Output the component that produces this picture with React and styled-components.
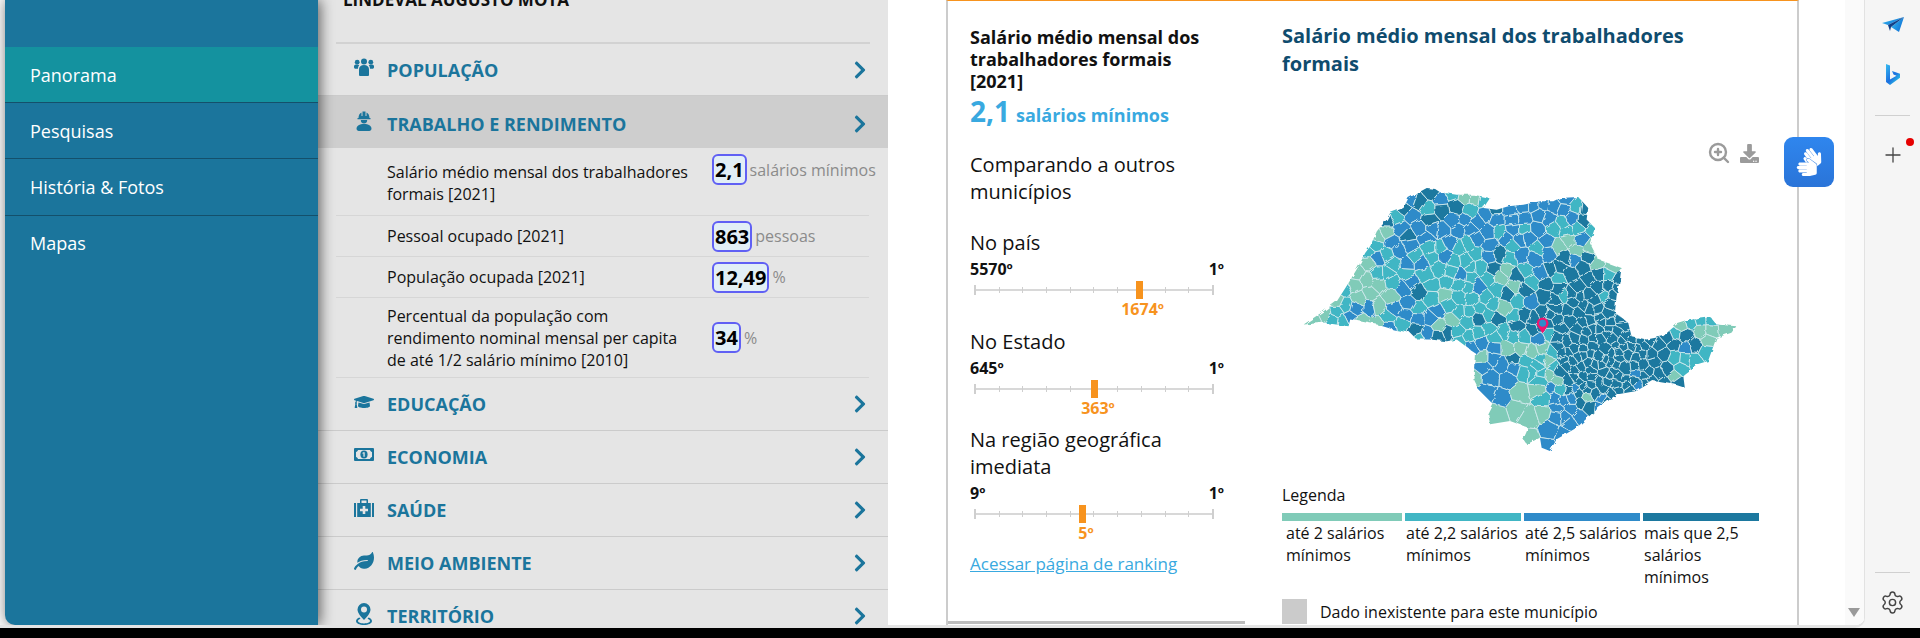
import { useMemo } from 'react';
import styled, { createGlobalStyle } from 'styled-components';
import { FaChevronRight, FaDownload, FaGraduationCap, FaLeaf, FaSignLanguage } from 'react-icons/fa';
import { Plus, Settings, ZoomIn } from 'lucide-react';

const GlobalStyle = createGlobalStyle`
  html, body {
    margin: 0;
    height: 100%;
    overflow: hidden;
    background: #000;
    font-family: "Open Sans", "Liberation Sans", sans-serif;
  }
`;

const OUTLINE = [[100,615],[160,575],[200,545],[235,490],[265,440],[285,400],[300,380],[320,335],[350,300],[360,280],[400,265],[415,235],[470,205],[495,208],[510,218],[560,225],[610,225],[660,235],[640,265],[680,270],[715,260],[760,255],[810,245],[850,245],[870,235],[925,232],[955,265],[950,300],[975,325],[960,370],[985,420],[1055,445],[1050,480],[1040,530],[1035,580],[1075,610],[1085,650],[1130,660],[1180,650],[1220,615],[1285,595],[1320,590],[1340,615],[1400,620],[1385,640],[1340,655],[1315,725],[1280,735],[1240,765],[1245,805],[1215,795],[1150,785],[1100,815],[1040,825],[980,870],[920,925],[860,960],[840,995],[815,985],[810,955],[770,975],[760,960],[775,925],[720,905],[660,915],[655,885],[670,855],[625,810],[610,780],[615,700],[600,690],[560,660],[530,665],[480,660],[440,660],[420,640],[370,630],[320,615],[240,600],[235,620],[160,610]];

const LEGEND_COLORS = ['#80cbb8', '#41b6c4', '#2f8bc9', '#1c789f'];

const ANCHORS = [
  [[760,830,1.4,100],[300,520,1.2,90],[700,480,1.2,50],[680,900,1.2,60],[1050,460,.8,40],[940,390,.9,30],[1350,640,1.5,50],[1060,650,.8,30]],
  [[830,870,1.6,40],[800,760,1.3,40],[1280,680,1.4,70],[560,450,.9,80],[200,590,1.6,40],[700,430,1,150],[350,450,.8,80],[620,600,1,60]],
  [[500,350,1.3,120],[780,300,1.5,90],[900,910,2.4,60],[700,740,1.2,50],[680,790,1.6,45],[1000,440,1,40],[270,560,1.2,30],[830,970,2,30],[450,570,1.2,50]],
  [[1000,700,2.1,110],[900,520,1.2,90],[1200,650,1.2,60],[700,580,1,60],[500,540,1,50],[450,230,1,60],[620,240,.9,40],[330,360,1,40]],
];

function makeRandom(seed) {
  let a = seed;
  return () => {
    a = (a + 0x6d2b79f5) | 0;
    let t = Math.imul(a ^ (a >>> 15), 1 | a);
    t = (t + Math.imul(t ^ (t >>> 7), 61 | t)) ^ t;
    return ((t ^ (t >>> 14)) >>> 0) / 4294967296;
  };
}

function isInside(x, y) {
  let inside = false;
  for (let i = 0, j = OUTLINE.length - 1; i < OUTLINE.length; j = i++) {
    const [xi, yi] = OUTLINE[i];
    const [xj, yj] = OUTLINE[j];
    if (yi > y !== yj > y && x < ((xj - xi) * (y - yi)) / (yj - yi) + xi) inside = !inside;
  }
  return inside;
}

function spacing(x, y) {
  const metro = Math.hypot(x - 1010, y - 720);
  if (metro < 130) return 17;
  if (metro < 230) return 22;
  if (y > 760) return 40;
  return 27;
}

function clipCell(poly, a, b) {
  const mx = (a[0] + b[0]) / 2;
  const my = (a[1] + b[1]) / 2;
  const nx = b[0] - a[0];
  const ny = b[1] - a[1];
  const out = [];
  for (let i = 0; i < poly.length; i++) {
    const p = poly[i];
    const q = poly[(i + 1) % poly.length];
    const dp = (p[0] - mx) * nx + (p[1] - my) * ny;
    const dq = (q[0] - mx) * nx + (q[1] - my) * ny;
    if (dp <= 0) out.push(p);
    if (dp < 0 !== dq < 0) {
      const t = dp / (dp - dq);
      out.push([p[0] + (q[0] - p[0]) * t, p[1] + (q[1] - p[1]) * t]);
    }
  }
  return out;
}

function buildCells() {
  const random = makeRandom(1674);
  const seeds = [];
  for (let i = 0; i < 9000; i++) {
    const x = 90 + random() * 1320;
    const y = 195 + random() * 810;
    if (!isInside(x, y)) continue;
    const gap = spacing(x, y);
    if (seeds.every((s) => Math.hypot(s[0] - x, s[1] - y) > gap)) seeds.push([x, y]);
  }
  return seeds.map((seed) => {
    let poly = [[seed[0] - 120, seed[1] - 120], [seed[0] + 120, seed[1] - 120], [seed[0] + 120, seed[1] + 120], [seed[0] - 120, seed[1] + 120]];
    seeds
      .filter((s) => s !== seed && Math.hypot(s[0] - seed[0], s[1] - seed[1]) < 240)
      .forEach((s) => { poly = clipCell(poly, seed, s); });
    const scores = ANCHORS.map((list) =>
      list.reduce((sum, [ax, ay, w, r]) => sum + w * Math.exp(-((seed[0] - ax) ** 2 + (seed[1] - ay) ** 2) / (2 * r * r)), random() * 1.7)
    );
    return {
      points: poly.map((p) => p.map((n) => n.toFixed(1)).join(',')).join(' '),
      color: LEGEND_COLORS[scores.indexOf(Math.max(...scores))],
    };
  });
}

const Frame = styled.div`
  display: flex;
  width: 1920px;
  height: 628px;
  background: #f5f5f5;
  overflow: hidden;
`;

const Viewport = styled.div`
  display: flex;
  width: 1865px;
  height: 628px;
  background: #f8f8f8;
  border-bottom-right-radius: 10px;
  border-right: 1px solid #e2e2e2;
  border-bottom: 3px solid #e4e4e4;
  box-sizing: border-box;
  overflow: hidden;
`;

const Sidebar = styled.nav`
  width: 313px;
  margin-left: 5px;
  flex-shrink: 0;
  padding-top: 47px;
  box-sizing: border-box;
  background: #1b759c;
  border-bottom-left-radius: 10px;
  box-shadow: 2px 0 14px rgba(0, 0, 0, 0.6);
  position: relative;
  z-index: 2;
`;

const NavItem = styled.a`
  display: flex;
  align-items: center;
  height: ${(p) => p.$height}px;
  padding-left: 25px;
  box-sizing: border-box;
  color: #fff;
  font-size: 18px;
  background: ${(p) => (p.$active ? '#14929f' : 'transparent')};
  border-bottom: ${(p) => (p.$last ? 'none' : '1px solid #14506b')};
`;

const Panel = styled.section`
  width: 570px;
  flex-shrink: 0;
  background: #e5e5e5;
  overflow: hidden;
`;

const Person = styled.h2`
  margin: -12px 18px 0;
  height: 56px;
  padding-left: 7px;
  box-sizing: border-box;
  border-bottom: 2px solid #d2d2d2;
  font-size: 17px;
  line-height: 24px;
  font-weight: 700;
  color: #111;
`;

const TopicRow = styled.div`
  display: flex;
  align-items: center;
  height: ${(p) => p.$height || 53}px;
  flex-shrink: 0;
  padding: ${(p) => (p.$open ? '3px' : '0')} 18px 0 36px;
  box-sizing: border-box;
  background: ${(p) => (p.$open ? '#cecece' : 'transparent')};
  border-bottom: ${(p) => (p.$open ? 'none' : '1px solid #cbcbcb')};
  color: #1b759c;
`;

const TopicIcon = styled.span`
  display: flex;
  justify-content: center;
  width: 20px;
  margin: -5px 13px 0 0;
  font-size: 20px;
`;

const TopicName = styled.span`
  flex: 1;
  font-size: 18px;
  font-weight: 700;
`;

const Stat = styled.div`
  display: grid;
  grid-template-columns: 325px 1fr;
  align-items: ${(p) => (p.$top ? 'start' : 'center')};
  height: ${(p) => p.$height}px;
  margin: 0 19px 0 18px;
  padding: ${(p) => (p.$top ? '6px' : '0')} 0 0 51px;
  box-sizing: border-box;
  border-bottom: 1px solid #d6d6d6;
`;

const StatLabel = styled.div`
  width: ${(p) => p.$width || 310}px;
  margin-top: ${(p) => (p.$top ? '7px' : '0')};
  font-size: 16px;
  line-height: 22px;
  color: #111;
`;

const StatValue = styled.div`
  display: flex;
  align-items: center;
  white-space: nowrap;
`;

const ValueBox = styled.b`
  height: 31px;
  padding: 0 1px;
  box-sizing: border-box;
  border: 2px solid #6060f4;
  border-radius: 6px;
  background: #e2eff6;
  font-size: 20px;
  line-height: 27px;
  color: #000;
`;

const Unit = styled.span`
  margin-left: 3px;
  font-size: 16px;
  color: #8b8b8b;
`;

const Page = styled.main`
  flex: 1;
  position: relative;
  background: #fff;
  padding-left: 58px;
  min-width: 0;
`;

const Card = styled.article`
  display: flex;
  width: 853px;
  height: 625px;
  box-sizing: border-box;
  border-top: 1px solid #f7931e;
  border-left: 2px solid #cccccc;
  border-right: 2px solid #cccccc;
`;

const Summary = styled.div`
  width: 297px;
  height: 623px;
  flex-shrink: 0;
  padding: 25px 0 0 22px;
  box-sizing: border-box;
  border-bottom: 3px solid #bdbdbd;
`;

const SummaryTitle = styled.h3`
  margin: 0;
  width: 250px;
  font-size: 18px;
  line-height: 22px;
  font-weight: 700;
  color: #111;
`;

const SummaryValue = styled.div`
  display: flex;
  align-items: baseline;
  height: 38px;
  line-height: 38px;
  font-size: 18px;
  font-weight: 700;
  color: #39a9e0;

  b {
    margin-right: 6px;
    font-size: 28px;
    font-weight: 700;
  }
`;

const CompareTitle = styled.div`
  margin: 21px 0 24px;
  font-size: 20px;
  line-height: 27px;
  color: #111;
`;

const RankBlock = styled.div`
  width: 254px;
  height: ${(p) => p.$height}px;
`;

const RankName = styled.div`
  width: 230px;
  font-size: 20px;
  line-height: 27px;
  color: #111;
`;

const RankEnds = styled.div`
  display: flex;
  justify-content: space-between;
  margin-top: 1px;
  font-size: 16px;
  line-height: 24px;
  font-weight: 700;
  color: #111;
`;

const Track = styled.div`
  position: relative;
  display: flex;
  justify-content: space-between;
  align-items: center;
  width: 240px;
  height: 10px;
  margin: 4px 0 0 4px;

  &::before {
    content: '';
    position: absolute;
    left: 0;
    right: 0;
    top: 4px;
    height: 2px;
    background: #d8d8d8;
  }
`;

const Tick = styled.i`
  width: ${(p) => (p.$end ? 2 : 1)}px;
  height: ${(p) => (p.$end ? 10 : 6)}px;
  background: #cfcfcf;
  position: relative;
`;

const Marker = styled.div`
  position: absolute;
  left: ${(p) => p.$at}%;
  top: -4px;
  width: 7px;
  height: 18px;
  margin-left: -3.5px;
  background: #f7931e;
`;

const MarkerLabel = styled.div`
  position: absolute;
  left: ${(p) => p.$at}%;
  top: 13px;
  transform: translateX(calc(-50% + 3px));
  font-size: 16px;
  line-height: 22px;
  font-weight: 700;
  color: #f7931e;
`;

const RankingLink = styled.a`
  display: block;
  margin-top: 1px;
  font-size: 17px;
  line-height: 22px;
  color: #39a9e0;
  text-decoration: underline;
`;

const Chart = styled.div`
  width: 484px;
  margin-left: 37px;
`;

const ChartTitle = styled.h3`
  width: 450px;
  margin: 21px 0 0;
  font-size: 20px;
  line-height: 28px;
  font-weight: 700;
  color: #0f4c6e;
`;

const ChartTools = styled.div`
  display: flex;
  justify-content: flex-end;
  align-items: center;
  gap: 9px;
  height: 20px;
  margin: 65px 7px 0 0;
  color: #9b9b9b;
`;

const MapBox = styled.svg`
  display: block;
  width: 440px;
  height: 273px;
  margin: 20px 0 0 18px;
`;

const LegendTitle = styled.div`
  margin-top: 28px;
  font-size: 16px;
  line-height: 22px;
  color: #111;
`;

const LegendGrid = styled.div`
  display: grid;
  grid-template-columns: 120px 116px 116px 116px;
  gap: 3px;
  margin-top: 7px;
  height: 86px;
`;

const LegendItem = styled.div`
  padding: 1px 0 0 ${(p) => p.$pad}px;
  border-top: 8px solid ${(p) => p.$color};
  font-size: 16px;
  line-height: 22px;
  color: #111;
`;

const NoData = styled.div`
  display: flex;
  align-items: center;
  gap: 13px;
  font-size: 16px;
  color: #111;

  i {
    width: 25px;
    height: 25px;
    background: #cbcbcb;
  }
`;

const SignButton = styled.button`
  position: absolute;
  top: 137px;
  left: 896px;
  display: flex;
  align-items: center;
  justify-content: center;
  width: 50px;
  height: 50px;
  padding: 0;
  border: none;
  border-radius: 9px;
  background: linear-gradient(180deg, #2f86ee, #2a74d8);
  color: #fff;
  font-size: 28px;
`;

const ScrollArrow = styled.i`
  position: absolute;
  right: 4px;
  bottom: 8px;
  width: 0;
  height: 0;
  border-left: 6px solid transparent;
  border-right: 6px solid transparent;
  border-top: 9px solid #9a9a9a;
`;

const ScrollTrack = styled.div`
  position: absolute;
  top: 0;
  right: 0;
  bottom: 0;
  width: 19px;
  background: #fafafa;
`;

const EdgeBar = styled.aside`
  flex: 1;
  display: flex;
  flex-direction: column;
  align-items: center;
  padding-top: 17px;
  box-sizing: border-box;
  height: 628px;
  background: #f5f5f5;
`;

const EdgeIcon = styled.div`
  position: relative;
  display: flex;
  justify-content: center;
  margin-top: ${(p) => p.$gap}px;
  color: #444;
`;

const EdgeLine = styled.hr`
  width: 35px;
  margin: ${(p) => p.$gap}px 0 0;
  border: none;
  border-top: 1px solid #d0d0d0;
`;

const RedDot = styled.i`
  position: absolute;
  top: -5px;
  right: -9px;
  width: 8px;
  height: 8px;
  border-radius: 50%;
  background: #e60000;
`;

const UsersIcon = () => (
  <svg width="20" height="18" viewBox="0 0 20 18" fill="currentColor">
    <circle cx="3.2" cy="4.2" r="2.4" />
    <circle cx="16.8" cy="4.2" r="2.4" />
    <circle cx="10" cy="3.4" r="3" />
    <path d="M0 8.2c0-1 1-1.6 3-1.6 1 0 1.7.2 2.2.6-.8.8-1.2 2-1.2 3.6H1.6C.6 10.8 0 10 0 9.2zM20 8.2c0-1-1-1.6-3-1.6-1 0-1.7.2-2.2.6.8.8 1.2 2 1.2 3.6h2.4c1 0 1.6-.8 1.6-1.6z" />
    <path d="M5 11.500c0-3 2-4.500 5-4.500s5 1.500 5 4.500V17a1 1 0 0 1-1 1H6a1 1 0 0 1-1-1z" />
  </svg>
);

const WorkerIcon = () => (
  <svg width="16" height="20" viewBox="0 0 16 20" fill="currentColor">
    <path d="M2.500 7c0-3 1.500-5 3-5.500V5h1V.6h3V5h1V1.500c1.500.5 3 2.500 3 5.500h1v1.200H1.500V7z" />
    <path d="M4.800 9h6.400c0 2-1 3.500-3.200 3.500S4.800 11 4.800 9z" />
    <path d="M8 13c-4.500 0-7.500 2-7.500 4.800C.5 19 1.500 20 2.800 20h10.400c1.300 0 2.300-1 2.300-2.200C15.500 15 12.500 13 8 13z" />
  </svg>
);

const MoneyIcon = () => (
  <svg width="20" height="13" viewBox="0 0 20 13">
    <rect width="20" height="13" rx="1" fill="currentColor" />
    <path d="M4 2h12c.3 1 1 1.700 2 2v5c-1 .3-1.700 1-2 2H4c-.3-1-1-1.700-2-2V4c1-.3 1.700-1 2-2z" fill="#e5e5e5" />
    <ellipse cx="10" cy="6.500" rx="3.600" ry="4" fill="currentColor" />
    <path d="M9.400 4.200h1.300v4.600H9.400V5.500l-.9.3V4.800z" fill="#e5e5e5" />
  </svg>
);

const HealthIcon = () => (
  <svg width="20" height="18" viewBox="0 0 20 18" fill="currentColor" fillRule="evenodd">
    <path d="M0 4h2v14H0zM18 4h2v14h-2zM7 0h6a1 1 0 0 1 1 1v3h2.800v14H3.200V4H6V1a1 1 0 0 1 1-1zm.5 1.500V4h5V1.500zM8.700 7v2.800H6v2.400h2.700V15h2.600v-2.800H14V9.800h-2.700V7z" />
  </svg>
);

const PinIcon = () => (
  <svg width="16" height="22" viewBox="0 0 16 22" fill="currentColor" fillRule="evenodd">
    <path d="M8 0a6.500 6.500 0 0 1 6.500 6.500C14.500 10 11 14 8 17 5 14 1.500 10 1.500 6.500A6.500 6.500 0 0 1 8 0zm0 3.500a3 3 0 1 0 0 6 3 3 0 0 0 0-6z" />
    <path d="M3.500 14.500C1.400 15.200 0 16.400 0 18c0 2.400 3.500 4 8 4s8-1.600 8-4c0-1.600-1.400-2.800-3.500-3.500l-1 1.200c1.500.5 2.500 1.300 2.500 2.300 0 1.300-2.700 2.400-6 2.400S2 19.300 2 18c0-1 1-1.800 2.500-2.300z" />
  </svg>
);

const TelegramIcon = () => (
  <svg width="22" height="15" viewBox="0 0 22 15">
    <defs>
      <linearGradient id="planeFill" x1="0" y1="0" x2="1" y2="0.6">
        <stop offset="0" stopColor="#35c1f1" />
        <stop offset="1" stopColor="#1271d6" />
      </linearGradient>
    </defs>
    <path d="M0 6 L22 0 L6 8 Z" fill="url(#planeFill)" />
    <path d="M22 0 L17 15 L9 10 Z" fill="url(#planeFill)" />
    <path d="M6 8 L22 0 L9 10 L8 14 Z" fill="#123f86" />
  </svg>
);

const BingIcon = () => (
  <svg width="14" height="21" viewBox="0 0 14 21">
    <defs>
      <linearGradient id="bingFill" x1="0" y1="0" x2="0.8" y2="1">
        <stop offset="0" stopColor="#37bdf0" />
        <stop offset="0.6" stopColor="#1b6fe0" />
        <stop offset="1" stopColor="#2fd2e4" />
      </linearGradient>
    </defs>
    <path d="M0 0 L4 1.500 V15.500 L10.500 11.800 L7.500 10.600 L6 7 L14 9.800 V13.800 L4 21 L0 18 Z" fill="url(#bingFill)" />
  </svg>
);

const topicIcons = {
  users: <UsersIcon />,
  worker: <WorkerIcon />,
  school: <FaGraduationCap />,
  money: <MoneyIcon />,
  health: <HealthIcon />,
  leaf: <FaLeaf />,
  pin: <PinIcon />,
};

const Topic = ({ icon, name, open, height }) => (
  <TopicRow $open={open} $height={height}>
    <TopicIcon>{topicIcons[icon]}</TopicIcon>
    <TopicName>{name}</TopicName>
    <FaChevronRight size={20} />
  </TopicRow>
);

const stats = [
  { label: 'Salário médio mensal dos trabalhadores formais [2021]', value: '2,1', unit: 'salários mínimos', height: 68, top: true },
  { label: 'Pessoal ocupado [2021]', value: '863', unit: 'pessoas', height: 41 },
  { label: 'População ocupada [2021]', value: '12,49', unit: '%', height: 41 },
  { label: 'Percentual da população com rendimento nominal mensal per capita de até 1/2 salário mínimo [2010]', value: '34', unit: '%', height: 80, width: 305 },
];

const ranks = [
  { name: 'No país', low: '5570º', value: '1674º', at: 69, height: 99 },
  { name: 'No Estado', low: '645º', value: '363º', at: 50.4, height: 98 },
  { name: 'Na região geográfica imediata', low: '9º', value: '5º', at: 45.4, height: 126 },
];

const legend = [
  { color: LEGEND_COLORS[0], text: 'até 2 salários mínimos', pad: 4 },
  { color: LEGEND_COLORS[1], text: 'até 2,2 salários mínimos', pad: 1 },
  { color: LEGEND_COLORS[2], text: 'até 2,5 salários mínimos', pad: 1 },
  { color: LEGEND_COLORS[3], text: 'mais que 2,5 salários mínimos', pad: 1 },
];

const StateMap = () => {
  const cells = useMemo(buildCells, []);
  return (
    <MapBox viewBox="90 190 1320 820">
      <defs>
        <clipPath id="stateShape">
          <polygon points={OUTLINE.join(' ')} />
        </clipPath>
        <filter id="wobble" x="-5%" y="-5%" width="110%" height="110%">
          <feTurbulence type="fractalNoise" baseFrequency="0.045" numOctaves="2" seed="4" />
          <feDisplacementMap in="SourceGraphic" scale="14" />
        </filter>
      </defs>
      <g filter="url(#wobble)">
        <g clipPath="url(#stateShape)">
          {cells.map((cell, i) => (
            <polygon key={i} points={cell.points} fill={cell.color} stroke="#d0e9ec" strokeWidth="2.6" />
          ))}
        </g>
      </g>
      <path d="M818 641 L804 622 A17.500 17.500 0 1 1 832 622 Z" fill="#f0146e" />
      <circle cx="818" cy="611" r="10.500" fill="#2f8bc9" />
    </MapBox>
  );
};

const App = () => (
  <>
    <GlobalStyle />
    <Frame>
      <Viewport>
        <Sidebar>
          <NavItem $active $height={56}>Panorama</NavItem>
          <NavItem $height={56}>Pesquisas</NavItem>
          <NavItem $height={57}>História &amp; Fotos</NavItem>
          <NavItem $last $height={54}>Mapas</NavItem>
        </Sidebar>
        <Panel>
          <Person>LINDEVAL AUGUSTO MOTA</Person>
          <Topic icon="users" name="POPULAÇÃO" height={52} open={false} />
          <Topic icon="worker" name="TRABALHO E RENDIMENTO" height={52} open />
          {stats.map((s) => (
            <Stat key={s.value} $height={s.height} $top={s.top}>
              <StatLabel $top={s.top} $width={s.width}>{s.label}</StatLabel>
              <StatValue>
                <ValueBox>{s.value}</ValueBox>
                <Unit>{s.unit}</Unit>
              </StatValue>
            </Stat>
          ))}
          <Topic icon="school" name="EDUCAÇÃO" />
          <Topic icon="money" name="ECONOMIA" />
          <Topic icon="health" name="SAÚDE" />
          <Topic icon="leaf" name="MEIO AMBIENTE" />
          <Topic icon="pin" name="TERRITÓRIO" />
        </Panel>
        <Page>
          <ScrollTrack />
          <Card>
            <Summary>
              <SummaryTitle>Salário médio mensal dos trabalhadores formais [2021]</SummaryTitle>
              <SummaryValue><b>2,1</b>salários mínimos</SummaryValue>
              <CompareTitle>Comparando a outros<br />municípios</CompareTitle>
              {ranks.map((r) => (
                <RankBlock key={r.name} $height={r.height}>
                  <RankName>{r.name}</RankName>
                  <RankEnds><span>{r.low}</span><span>1º</span></RankEnds>
                  <Track>
                    {Array.from({ length: 11 }, (_, i) => (
                      <Tick key={i} $end={i === 0 || i === 10} />
                    ))}
                    <Marker $at={r.at} />
                    <MarkerLabel $at={r.at}>{r.value}</MarkerLabel>
                  </Track>
                </RankBlock>
              ))}
              <RankingLink>Acessar página de ranking</RankingLink>
            </Summary>
            <Chart>
              <ChartTitle>Salário médio mensal dos trabalhadores formais</ChartTitle>
              <ChartTools>
                <ZoomIn size={24} strokeWidth={2.4} />
                <FaDownload size={19} />
              </ChartTools>
              <StateMap />
              <LegendTitle>Legenda</LegendTitle>
              <LegendGrid>
                {legend.map((l) => (
                  <LegendItem key={l.color} $color={l.color} $pad={l.pad}>{l.text}</LegendItem>
                ))}
              </LegendGrid>
              <NoData><i />Dado inexistente para este município</NoData>
            </Chart>
          </Card>
          <SignButton aria-label="Libras"><FaSignLanguage /></SignButton>
          <ScrollArrow />
        </Page>
      </Viewport>
      <EdgeBar>
        <EdgeIcon $gap={0}><TelegramIcon /></EdgeIcon>
        <EdgeIcon $gap={32}><BingIcon /></EdgeIcon>
        <EdgeLine $gap={30} />
        <EdgeIcon $gap={27}><Plus size={24} strokeWidth={1.3} /><RedDot /></EdgeIcon>
        <EdgeLine $gap={405} />
        <EdgeIcon $gap={17}><Settings size={25} strokeWidth={1.4} /></EdgeIcon>
      </EdgeBar>
    </Frame>
  </>
);

export default App;
